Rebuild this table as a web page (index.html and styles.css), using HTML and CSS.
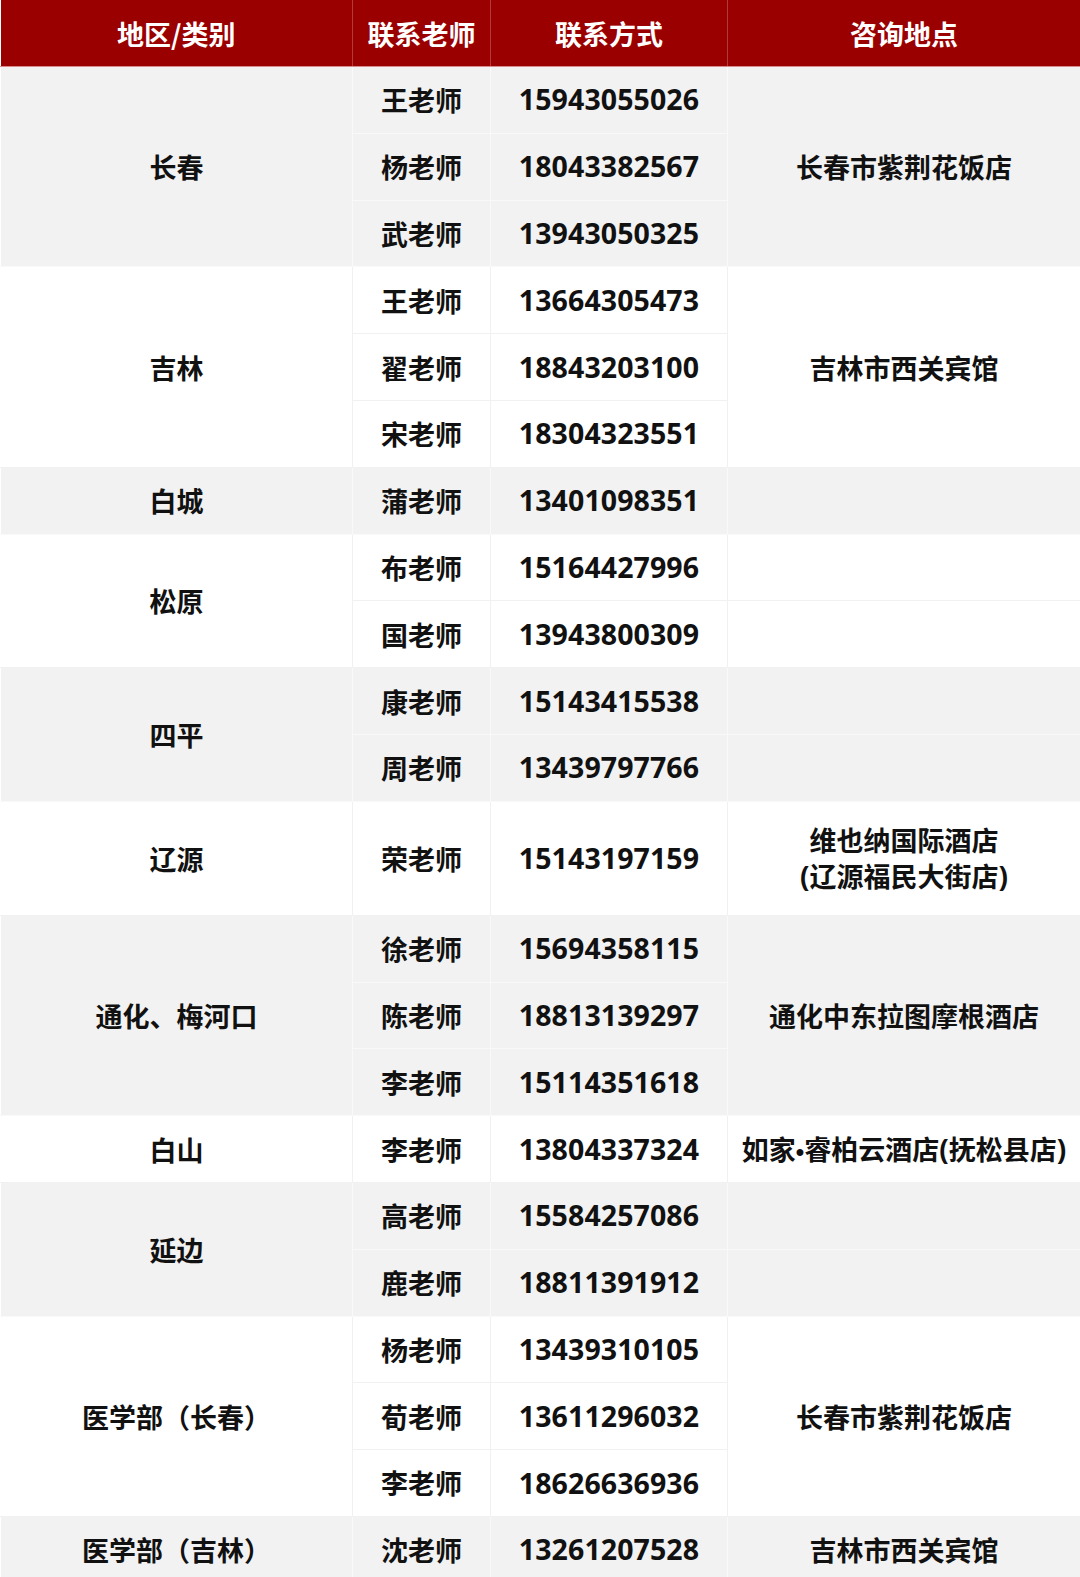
FILE: index.html
```html
<!DOCTYPE html>
<html lang="zh-CN">
<head>
<meta charset="utf-8">
<link rel="stylesheet" href="styles.css">
</head>
<body>
<table class="contacts">
  <colgroup>
    <col class="c1"><col class="c2"><col class="c3"><col class="c4">
  </colgroup>
  <thead>
    <tr><th>地区/类别</th><th>联系老师</th><th>联系方式</th><th>咨询地点</th></tr>
  </thead>
  <tbody class="g">
    <tr><td rowspan="3">长春</td><td>王老师</td><td class="num">15943055026</td><td rowspan="3">长春市紫荆花饭店</td></tr>
    <tr><td>杨老师</td><td class="num">18043382567</td></tr>
    <tr><td>武老师</td><td class="num">13943050325</td></tr>
  </tbody>
  <tbody class="w">
    <tr><td rowspan="3">吉林</td><td>王老师</td><td class="num">13664305473</td><td rowspan="3">吉林市西关宾馆</td></tr>
    <tr><td>翟老师</td><td class="num">18843203100</td></tr>
    <tr><td>宋老师</td><td class="num">18304323551</td></tr>
  </tbody>
  <tbody class="g">
    <tr><td>白城</td><td>蒲老师</td><td class="num">13401098351</td><td></td></tr>
  </tbody>
  <tbody class="w">
    <tr><td rowspan="2">松原</td><td>布老师</td><td class="num">15164427996</td><td></td></tr>
    <tr><td>国老师</td><td class="num">13943800309</td><td></td></tr>
  </tbody>
  <tbody class="g">
    <tr><td rowspan="2">四平</td><td>康老师</td><td class="num">15143415538</td><td></td></tr>
    <tr><td>周老师</td><td class="num">13439797766</td><td></td></tr>
  </tbody>
  <tbody class="w">
    <tr class="tall"><td>辽源</td><td>荣老师</td><td class="num">15143197159</td><td class="two">维也纳国际酒店<br><span class="lp">(</span>辽源福民大街店<span class="lp">)</span></td></tr>
  </tbody>
  <tbody class="g">
    <tr><td rowspan="3">通化、梅河口</td><td>徐老师</td><td class="num">15694358115</td><td rowspan="3">通化中东拉图摩根酒店</td></tr>
    <tr><td>陈老师</td><td class="num">18813139297</td></tr>
    <tr><td>李老师</td><td class="num">15114351618</td></tr>
  </tbody>
  <tbody class="w">
    <tr><td>白山</td><td>李老师</td><td class="num">13804337324</td><td>如家<span class="dot">•</span>睿柏云酒店<span class="lp">(</span>抚松县店<span class="lp">)</span></td></tr>
  </tbody>
  <tbody class="g">
    <tr><td rowspan="2">延边</td><td>高老师</td><td class="num">15584257086</td><td></td></tr>
    <tr><td>鹿老师</td><td class="num">18811391912</td><td></td></tr>
  </tbody>
  <tbody class="w">
    <tr><td rowspan="3">医学部（长春）</td><td>杨老师</td><td class="num">13439310105</td><td rowspan="3">长春市紫荆花饭店</td></tr>
    <tr><td>荀老师</td><td class="num">13611296032</td></tr>
    <tr><td>李老师</td><td class="num">18626636936</td></tr>
  </tbody>
  <tbody class="g">
    <tr><td>医学部（吉林）</td><td>沈老师</td><td class="num">13261207528</td><td>吉林市西关宾馆</td></tr>
  </tbody>
</table>
</body>
</html>
```
FILE: styles.css
```css
html, body {
  margin: 0;
  padding: 0;
  background: #ffffff;
}
.contacts {
  width: 1080px;
  border-collapse: collapse;
  table-layout: fixed;
  font-family: "Microsoft YaHei", "Noto Sans CJK SC", sans-serif;
  font-weight: 700;
  font-size: 27px;
  color: #111111;
  text-align: center;
  border-right: 1px solid #a8a8a8;
  border-bottom: 1px solid #a8a8a8;
}
.c1 { width: 352px; }
.c2 { width: 138px; }
.c3 { width: 237px; }
.c4 { width: 353px; }
.contacts th {
  height: 66px;
  padding: 0;
  background: #9b0000;
  color: #ffffff;
  font-weight: 700;
  border-left: 1px solid #b53a3a;
  border-bottom: 1px solid #d98a8a;
}
.contacts th:first-child { border-left: none; }
.contacts td {
  height: 65.8px;
  padding: 0;
  line-height: 1.3;
  border: 1px solid transparent;
}
.contacts td.num {
  font-family: "Open Sans", "Noto Sans CJK SC", sans-serif;
  font-size: 28.5px;
  letter-spacing: 0.1px;
}
.contacts tr.tall td { height: 113px; }
.contacts td.two { line-height: 36px; }
.lp {
  font-family: "Open Sans", sans-serif;
  font-size: 28px;
}
.dot {
  font-family: "Liberation Sans", sans-serif;
  font-size: 24px;
}
.g td {
  background: #f2f2f2;
  border-color: #f9f9f9;
}
.w td {
  background: #ffffff;
  border-color: #f1f1f1;
}
.contacts tbody tr:first-child td { border-top-color: transparent; }
.contacts td:first-child { border-left-color: transparent; }
```
